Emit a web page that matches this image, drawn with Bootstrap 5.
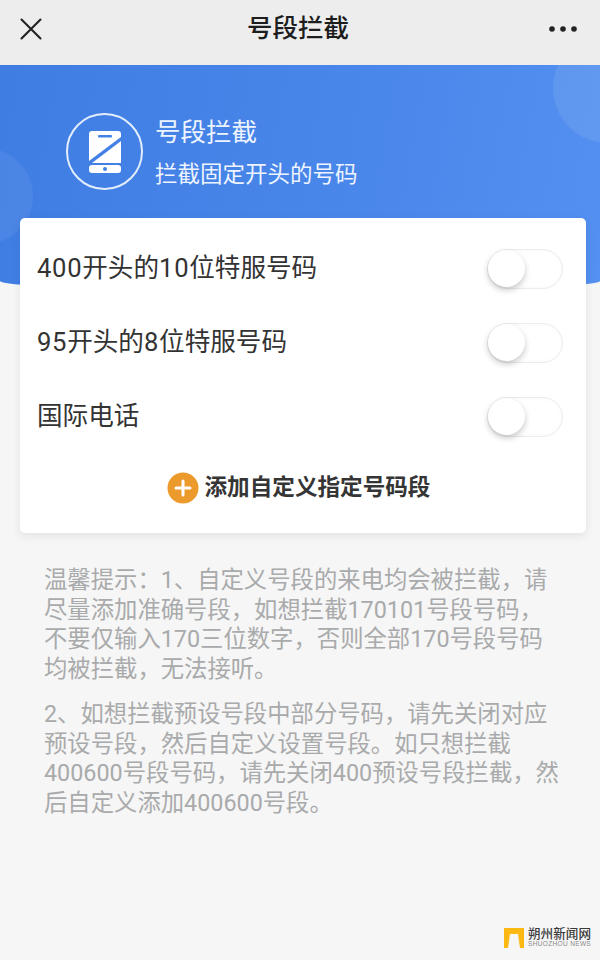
<!DOCTYPE html>
<html lang="zh">
<head>
<meta charset="utf-8">
<title>号段拦截</title>
<link rel="stylesheet" href="https://cdn.jsdelivr.net/npm/bootstrap@5.3.0/dist/css/bootstrap.min.css">
<style>
html,body{height:100%}
body{background:#f6f6f6;font-family:"Roboto","Noto Sans CJK SC",sans-serif;color:#333;overflow:hidden;position:relative;width:600px;height:960px}
.topbar{height:65px;background:#ededed;color:#1d1d1d;padding:0 22px 7px 20px;flex:none}
.topbar h1{font-size:25.5px;font-weight:500;margin:0 0 0 6px;line-height:1}
.hero{height:226px;background:linear-gradient(100deg,#3f7de3 0%,#4a87ea 60%,#5390f0 100%);border-radius:0 0 50% 50% / 0 0 10px 10px;position:relative;overflow:hidden;color:#fff;padding:48px 0 0 66px}
.blob1{position:absolute;width:110px;height:110px;border-radius:50%;background:rgba(255,255,255,.09);right:-63px;top:-32px}
.blob2{position:absolute;width:96px;height:96px;border-radius:50%;background:rgba(255,255,255,.06);left:-63px;top:83px}
.badge-ring{width:77px;height:77px;border:2px solid #e3eefc;border-radius:50%;flex:none;margin-right:4px}
.hero-title{font-size:25.5px;line-height:34px;margin-top:2px;color:#eef4ff}
.hero-sub{font-size:22.5px;line-height:34px;margin-top:8px;color:#eef4ff}
.panel{margin:-73px 14px 0 20px;background:#fff;border-radius:5px;box-shadow:0 3px 8px rgba(40,60,90,.1);height:315px;position:relative;padding:14px 23px 0 17px}
.opt-row{height:74px}
.opt-row>span{font-size:25.6px;color:#333;margin-top:-1px}
.dg{letter-spacing:.7px}
.tog{width:76px;height:40px;border:1px solid #ececec;border-radius:20px;position:relative;background:#fff;box-shadow:0 0 3px rgba(0,0,0,.05) inset}
.tog::after{content:"";position:absolute;left:0;top:0;width:37px;height:37px;border-radius:50%;background:#fff;box-shadow:0 3px 6px rgba(0,0,0,.22)}
.add-row{height:48px;margin-top:10px;gap:6px;padding-right:3px}
.add-row span{font-size:22.6px;font-weight:700;color:#353535}
.hint{margin:33px 0 0 44px;color:#a9aaab;font-size:23.35px;line-height:29.5px;white-space:nowrap}
.hint p{margin:0 0 16px}
.mark-wrap{position:absolute;left:504px;top:928px;gap:4px}
.mark-cn{font-size:12.6px;line-height:12px;font-weight:500;color:#3b3b3b;white-space:nowrap}
.mark-en{font-family:"Liberation Sans",sans-serif;font-size:6.5px;line-height:8px;letter-spacing:.35px;color:#8a8a8a;white-space:nowrap}
</style>
</head>
<body>
<header class="topbar d-flex align-items-center justify-content-between">
  <svg width="22" height="22" viewBox="0 0 22 22" fill="none" stroke="#222" stroke-width="2.1" stroke-linecap="round"><path d="M1.5 1.5 20.5 20.5M20.5 1.5 1.5 20.5"/></svg>
  <h1>号段拦截</h1>
  <svg width="30" height="8" viewBox="0 0 30 8" fill="#222"><circle cx="4" cy="4" r="2.8"/><circle cx="15" cy="4" r="2.8"/><circle cx="26" cy="4" r="2.8"/></svg>
</header>
<section class="hero">
  <div class="blob1"></div><div class="blob2"></div>
  <div class="d-flex gap-2">
    <div class="badge-ring d-flex align-items-center justify-content-center">
      <svg width="32" height="42" viewBox="0 0 32 42"><path fill="#fff" d="M3 0H29a3 3 0 0 1 3 3V6L0 30V3a3 3 0 0 1 3-3Z"/><path fill="#fff" d="M32 10V32H3Z"/><rect fill="#fff" y="34" width="32" height="8" rx="3"/><rect fill="#4382e6" x="9" y="4" width="14" height="2.4" rx="1"/><circle fill="#4382e6" cx="16" cy="38" r="2"/></svg>
    </div>
    <div>
      <div class="hero-title">号段拦截</div>
      <div class="hero-sub">拦截固定开头的号码</div>
    </div>
  </div>
</section>
<section class="panel">
  <div class="opt-row d-flex align-items-center justify-content-between"><span><span class="dg">400</span>开头的<span class="dg">10</span>位特服号码</span><div class="tog"></div></div>
  <div class="opt-row d-flex align-items-center justify-content-between"><span><span class="dg">95</span>开头的<span class="dg">8</span>位特服号码</span><div class="tog"></div></div>
  <div class="opt-row d-flex align-items-center justify-content-between"><span>国际电话</span><div class="tog"></div></div>
  <div class="add-row d-flex align-items-center justify-content-center">
    <svg width="32" height="32" viewBox="0 0 32 32"><circle cx="16" cy="16" r="15.5" fill="#ec9a2c"/><path d="M16 9v14M9 16h14" stroke="#fff" stroke-width="3" stroke-linecap="round"/></svg>
    <span>添加自定义指定号码段</span>
  </div>
</section>
<section class="hint">
  <p>温馨提示：1、自定义号段的来电均会被拦截，请<br>尽量添加准确号段，如想拦截170101号段号码，<br>不要仅输入170三位数字，否则全部170号段号码<br>均被拦截，无法接听。</p>
  <p>2、如想拦截预设号段中部分号码，请先关闭对应<br>预设号段，然后自定义设置号段。如只想拦截<br>400600号段号码，请先关闭400预设号段拦截，然<br>后自定义添加400600号段。</p>
</section>
<div class="mark-wrap d-flex align-items-start">
  <svg width="20" height="20" viewBox="0 0 20 20"><path fill="#fdb813" d="M0 0H20V20H16L14 6H6L4 20H0Z"/></svg>
  <div><div class="mark-cn">朔州新闻网</div><div class="mark-en">SHUOZHOU NEWS</div></div>
</div>
<script src="https://cdn.jsdelivr.net/npm/bootstrap@5.3.0/dist/js/bootstrap.bundle.min.js"></script>
</body>
</html>
